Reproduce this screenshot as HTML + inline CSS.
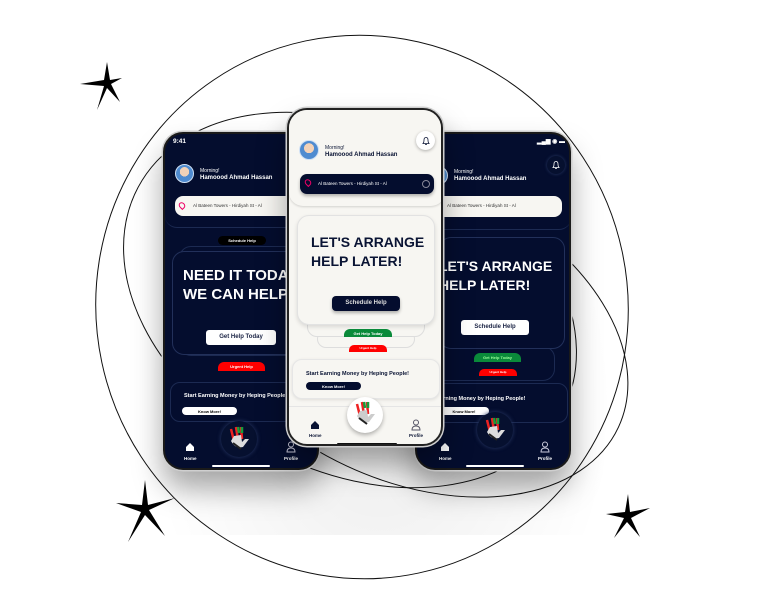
<!DOCTYPE html>
<html><head><meta charset="utf-8"><style>
*{margin:0;padding:0;box-sizing:border-box}
html,body{width:758px;height:600px;overflow:hidden}
body{background:#fff;position:relative;font-family:"Liberation Sans",sans-serif}
.abs{position:absolute}
.phone{position:absolute;width:156px;height:338px;border-radius:20px;overflow:hidden;border:2px solid #1a1a1a;box-shadow:0 0 0 1.5px #cfcfcf,0 18px 30px rgba(0,0,0,.35)}
.dark{background:#040d2e;color:#fff}
.light{background:#f7f6f2;color:#0a1434}
.t{position:absolute;white-space:nowrap;font-weight:bold}
.pill{position:absolute;border-radius:6px;font-size:4px;text-align:center;font-weight:bold;white-space:nowrap}
.av{position:absolute;border-radius:50%;background:radial-gradient(circle at 50% 40%,#f3d2b8 0 35%,#4f8bd0 36%);border:1px solid #cfe0f5}
.hand{position:absolute;width:36px;height:36px;border-radius:50%}
</style></head><body>
<div class="abs" style="left:145px;top:95px;width:470px;height:440px;background:radial-gradient(ellipse at 50% 70%,rgba(0,0,0,.08),rgba(0,0,0,0) 70%)"></div>
<svg class="abs" style="left:0;top:0" width="758" height="600">
<g fill="none" stroke="#111" stroke-width="1">
<ellipse cx="362" cy="307" rx="266" ry="272" transform="rotate(-12 362 307)"/>
<ellipse cx="350" cy="300" rx="240" ry="170" transform="rotate(28 350 300)"/>
<ellipse cx="410" cy="330" rx="230" ry="150" transform="rotate(25 410 330)"/>
</g>
<g fill="#000">
<path d="M107 62 L110 80 L122 78 L111 84 L120 102 L107 88 L97 110 L104 86 L80 84 L104 80Z"/>
<path d="M145 480 L148 505 L175 498 L149 510 L165 536 L145 515 L128 542 L141 512 L116 503 L142 505Z"/>
<path d="M628 494 L630 512 L650 508 L631 518 L640 537 L627 522 L614 538 L624 518 L606 514 L625 512Z"/>
</g>
</svg>

<!-- LEFT PHONE -->
<div class="phone dark" style="left:163px;top:132px">
<div class="t" style="left:8px;top:4px;font-size:6.5px">9:41</div>
<div class="av" style="left:10px;top:30px;width:19px;height:19px"></div>
<div class="t" style="left:35px;top:34px;font-size:5px;font-weight:normal">Morning!</div>
<div class="t" style="left:35px;top:41px;font-size:6px">Hamoood Ahmad Hassan</div>
<div class="abs" style="left:0;top:54px;width:160px;height:40px;border-bottom:1px solid #1c2a52;border-radius:0 0 12px 12px"></div>
<div class="abs" style="left:10px;top:62px;width:150px;height:20px;background:#f7f6f2;border-radius:8px;color:#333;font-size:4.5px;padding:7px 0 0 18px">Al Bateen Towers - Hirdiyah St - Al</div>
<div class="abs" style="left:14px;top:68px;width:6px;height:7px;border:1px solid #e06;border-radius:50% 50% 50% 0;transform:rotate(-45deg)"></div>
<div class="abs" style="left:14px;top:112px;width:150px;height:110px;border:1px solid #1c2a52;border-radius:12px"></div>
<div class="pill" style="left:53px;top:102px;width:48px;height:9px;background:#000;color:#fff;padding-top:2px">Schedule Help</div>
<div class="abs" style="left:7px;top:117px;width:160px;height:104px;border:1px solid #22305a;border-radius:12px;background:#040d2e"></div>
<div class="t" style="left:18px;top:132px;font-size:15px;line-height:19px">NEED IT TODAY<br>WE CAN HELP!</div>
<div class="pill" style="left:41px;top:196px;width:70px;height:15px;background:#fff;color:#1a2344;font-size:6px;padding-top:4px;border-radius:3px">Get Help Today</div>
<div class="pill" style="left:53px;top:228px;width:47px;height:9px;background:#f00;color:#fff;padding-top:2px;border-radius:6px 6px 0 0">Urgent Help</div>
<div class="abs" style="left:5px;top:248px;width:160px;height:40px;border:1px solid #1c2a52;border-radius:10px"></div>
<div class="t" style="left:19px;top:259px;font-size:5.5px">Start Earning Money by Heping People!</div>
<div class="pill" style="left:17px;top:273px;width:55px;height:8px;background:#fff;color:#000;padding-top:1.5px;border-radius:4px">Know More!</div>
<div class="hand" style="left:56px;top:287px;background:#06102f;box-shadow:0 0 4px #2a3a66"></div>
<svg class="abs" style="left:62px;top:291px" width="24" height="26"><path d="M4 4l3 12M9 2l2 13M14 2l1 12" stroke="#e22" stroke-width="2.5"/><path d="M11 2l1 6M15 2v6" stroke="#1a9c3a" stroke-width="2.5"/><path d="M4 16 Q8 24 16 22 L22 14 L18 14 L15 17 L14 10 L7 11Z" fill="#ddd"/><path d="M6 18 L14 24" stroke="#222" stroke-width="2"/></svg>
<svg class="abs" style="left:20px;top:308px" width="10" height="10"><path d="M1 5 L5 1 L9 5 V9 H1Z" fill="#fff"/></svg>
<div class="t" style="left:19px;top:322px;font-size:4.5px">Home</div>
<svg class="abs" style="left:121px;top:307px" width="10" height="12"><circle cx="5" cy="3.5" r="2.5" fill="none" stroke="#ccd" stroke-width="1"/><path d="M1 11 Q1 7 5 7 Q9 7 9 11Z" fill="none" stroke="#ccd" stroke-width="1"/></svg>
<div class="t" style="left:119px;top:322px;font-size:4.5px">Profile</div>
<div class="abs" style="left:47px;top:331px;width:58px;height:2px;background:#fff;border-radius:1px"></div>
</div>

<!-- RIGHT PHONE -->
<div class="phone dark" style="left:415px;top:132px">
<div class="t" style="left:120px;top:4px;font-size:6px">▂▄▆ ◉ ▬</div>
<div class="abs" style="left:130px;top:22px;width:18px;height:18px;border-radius:50%;background:#06102f;box-shadow:0 0 3px #2a3a66"></div>
<svg class="abs" style="left:134px;top:26px" width="10" height="10"><path d="M2 7.5 Q3 6.5 3 4 Q3 1.5 5 1.5 Q7 1.5 7 4 Q7 6.5 8 7.5Z M4 8.5 H6" fill="none" stroke="#fff" stroke-width="0.8"/></svg>
<div class="av" style="left:12px;top:32px;width:19px;height:19px"></div>
<div class="t" style="left:37px;top:35px;font-size:5px;font-weight:normal">Morning!</div>
<div class="t" style="left:37px;top:42px;font-size:6px">Hamoood Ahmad Hassan</div>
<div class="abs" style="left:0;top:56px;width:154px;height:40px;border-bottom:1px solid #1c2a52;border-radius:0 0 12px 12px"></div>
<div class="abs" style="left:10px;top:62px;width:135px;height:21px;background:#f7f6f2;border-radius:8px;color:#333;font-size:4.5px;padding:7px 0 0 20px">Al Bateen Towers - Hirdiyah St - Al</div>
<div class="abs" style="left:15px;top:212px;width:123px;height:35px;border:1px solid #1c2a52;border-radius:12px"></div>
<div class="abs" style="left:22px;top:103px;width:126px;height:112px;border:1px solid #22305a;border-radius:12px;background:#040d2e"></div>
<div class="t" style="left:22px;top:123px;font-size:14px;line-height:19px">LET'S ARRANGE<br>HELP LATER!</div>
<div class="pill" style="left:44px;top:186px;width:68px;height:15px;background:#fff;color:#1a2344;font-size:6px;padding-top:4px;border-radius:3px">Schedule Help</div>
<div class="pill" style="left:57px;top:219px;width:47px;height:9px;background:#0a8a3a;color:#9f9;padding-top:2px;border-radius:6px 6px 0 0">Get Help Today</div>
<div class="pill" style="left:62px;top:235px;width:38px;height:7px;background:#f00;color:#fff;font-size:3px;padding-top:1px;border-radius:5px 5px 0 0">Urgent Help</div>
<div class="abs" style="left:3px;top:249px;width:148px;height:40px;border:1px solid #1c2a52;border-radius:10px"></div>
<div class="t" style="left:14px;top:262px;font-size:5.5px">rt Earning Money by Heping People!</div>
<div class="pill" style="left:22px;top:273px;width:50px;height:8px;background:#fff;color:#000;padding-top:1.5px;border-radius:4px">Know More!</div>
<div class="hand" style="left:60px;top:278px;background:#06102f;box-shadow:0 0 4px #2a3a66"></div>
<svg class="abs" style="left:66px;top:282px" width="24" height="26"><path d="M4 4l3 12M9 2l2 13M14 2l1 12" stroke="#e22" stroke-width="2.5"/><path d="M11 2l1 6M15 2v6" stroke="#1a9c3a" stroke-width="2.5"/><path d="M4 16 Q8 24 16 22 L22 14 L18 14 L15 17 L14 10 L7 11Z" fill="#ddd"/><path d="M6 18 L14 24" stroke="#222" stroke-width="2"/></svg>
<svg class="abs" style="left:23px;top:308px" width="10" height="10"><path d="M1 5 L5 1 L9 5 V9 H1Z" fill="#fff"/></svg>
<div class="t" style="left:22px;top:322px;font-size:4.5px">Home</div>
<svg class="abs" style="left:123px;top:307px" width="10" height="12"><circle cx="5" cy="3.5" r="2.5" fill="none" stroke="#ccd" stroke-width="1"/><path d="M1 11 Q1 7 5 7 Q9 7 9 11Z" fill="none" stroke="#ccd" stroke-width="1"/></svg>
<div class="t" style="left:121px;top:322px;font-size:4.5px">Profile</div>
<div class="abs" style="left:49px;top:331px;width:58px;height:2px;background:#fff;border-radius:1px"></div>
</div>

<!-- CENTER PHONE -->
<div class="phone light" style="left:287px;top:108px;border-color:#222">
<div class="t" style="left:9px;top:4px;font-size:6.5px">9:41</div>
<div class="t" style="left:122px;top:4px;font-size:6px">▂▄▆ ◉ ▬</div>
<div class="abs" style="left:0;top:0;width:156px;height:96px;background:#f7f6f2;border-radius:0 0 14px 14px;box-shadow:0 1px 2px rgba(0,0,0,.15)"></div>
<div class="abs" style="left:127px;top:21px;width:19px;height:19px;border-radius:50%;background:#fff;box-shadow:0 1px 3px rgba(0,0,0,.3)"></div>
<svg class="abs" style="left:131.5px;top:25.5px" width="10" height="10"><path d="M2 7.5 Q3 6.5 3 4 Q3 1.5 5 1.5 Q7 1.5 7 4 Q7 6.5 8 7.5Z M4 8.5 H6" fill="none" stroke="#0a1434" stroke-width="0.8"/></svg>
<div class="av" style="left:10px;top:30px;width:20px;height:20px"></div>
<div class="t" style="left:36px;top:35px;font-size:5px;font-weight:normal">Morning!</div>
<div class="t" style="left:36px;top:42px;font-size:6px">Hamoood Ahmad Hassan</div>
<div class="abs" style="left:11px;top:64px;width:134px;height:20px;background:#040d2e;border-radius:7px;color:#fff;font-size:4.5px;padding:7px 0 0 18px;box-shadow:0 2px 3px rgba(0,0,0,.3)">Al Bateen Towers - Hirdiyah St - Al</div>
<div class="abs" style="left:16px;top:69px;width:6px;height:7px;border:1px solid #e06;border-radius:50% 50% 50% 0;transform:rotate(-45deg)"></div>
<div class="abs" style="left:133px;top:70px;width:8px;height:8px;border:1px solid #889;border-radius:50%"></div>
<div class="abs" style="left:28px;top:220px;width:98px;height:18px;background:#f7f6f2;border:1px solid #ddd;border-radius:10px"></div>
<div class="abs" style="left:18px;top:205px;width:118px;height:22px;background:#f7f6f2;border:1px solid #ddd;border-radius:10px"></div>
<div class="abs" style="left:8px;top:105px;width:138px;height:110px;background:#f7f6f2;border:1px solid #e2e2e2;border-radius:12px;box-shadow:0 2px 4px rgba(0,0,0,.12)"></div>
<div class="t" style="left:22px;top:123px;font-size:14px;line-height:19px;color:#0a1434">LET'S ARRANGE<br>HELP LATER!</div>
<div class="pill" style="left:43px;top:186px;width:68px;height:15px;background:#040d2e;color:#ddd;font-size:6px;padding-top:4px;border-radius:4px;box-shadow:0 2px 3px rgba(0,0,0,.3)">Schedule Help</div>
<div class="pill" style="left:55px;top:219px;width:48px;height:8px;background:#0a8a3a;color:#fff;padding-top:1.5px;border-radius:6px 6px 0 0">Get Help Today</div>
<div class="pill" style="left:60px;top:235px;width:38px;height:7px;background:#f00;color:#fff;font-size:3px;padding-top:1px;border-radius:5px 5px 0 0">Urgent Help</div>
<div class="abs" style="left:3px;top:249px;width:148px;height:40px;background:#f7f6f2;border:1px solid #e6e6e6;border-radius:10px;box-shadow:0 1px 3px rgba(0,0,0,.1)"></div>
<div class="t" style="left:17px;top:261px;font-size:5.5px;color:#0a1434">Start Earning Money by Heping People!</div>
<div class="pill" style="left:17px;top:272px;width:55px;height:8px;background:#040d2e;color:#fff;padding-top:1.5px;border-radius:4px">Know More!</div>
<div class="abs" style="left:0;top:296px;width:156px;height:42px;border-top:1px solid #e5e5e5"></div>
<div class="hand" style="left:58px;top:287px;background:#fff;box-shadow:0 2px 4px rgba(0,0,0,.3)"></div>
<svg class="abs" style="left:64px;top:290px" width="24" height="26"><path d="M4 4l3 12M9 2l2 13M14 2l1 12" stroke="#e22" stroke-width="2.5"/><path d="M11 2l1 6M15 2v6" stroke="#1a9c3a" stroke-width="2.5"/><path d="M4 16 Q8 24 16 22 L22 14 L18 14 L15 17 L14 10 L7 11Z" fill="#ccc"/><path d="M6 18 L14 24" stroke="#222" stroke-width="2"/></svg>
<svg class="abs" style="left:21px;top:310px" width="10" height="10"><path d="M1 5 L5 1 L9 5 V9 H1Z" fill="#0a1434"/></svg>
<div class="t" style="left:20px;top:323px;font-size:4.5px">Home</div>
<svg class="abs" style="left:122px;top:309px" width="10" height="12"><circle cx="5" cy="3.5" r="2.5" fill="none" stroke="#556" stroke-width="1"/><path d="M1 11 Q1 7 5 7 Q9 7 9 11Z" fill="none" stroke="#556" stroke-width="1"/></svg>
<div class="t" style="left:120px;top:323px;font-size:4.5px">Profile</div>
<div class="abs" style="left:48px;top:333px;width:60px;height:2px;background:#111;border-radius:1px"></div>
</div>
</body></html>
